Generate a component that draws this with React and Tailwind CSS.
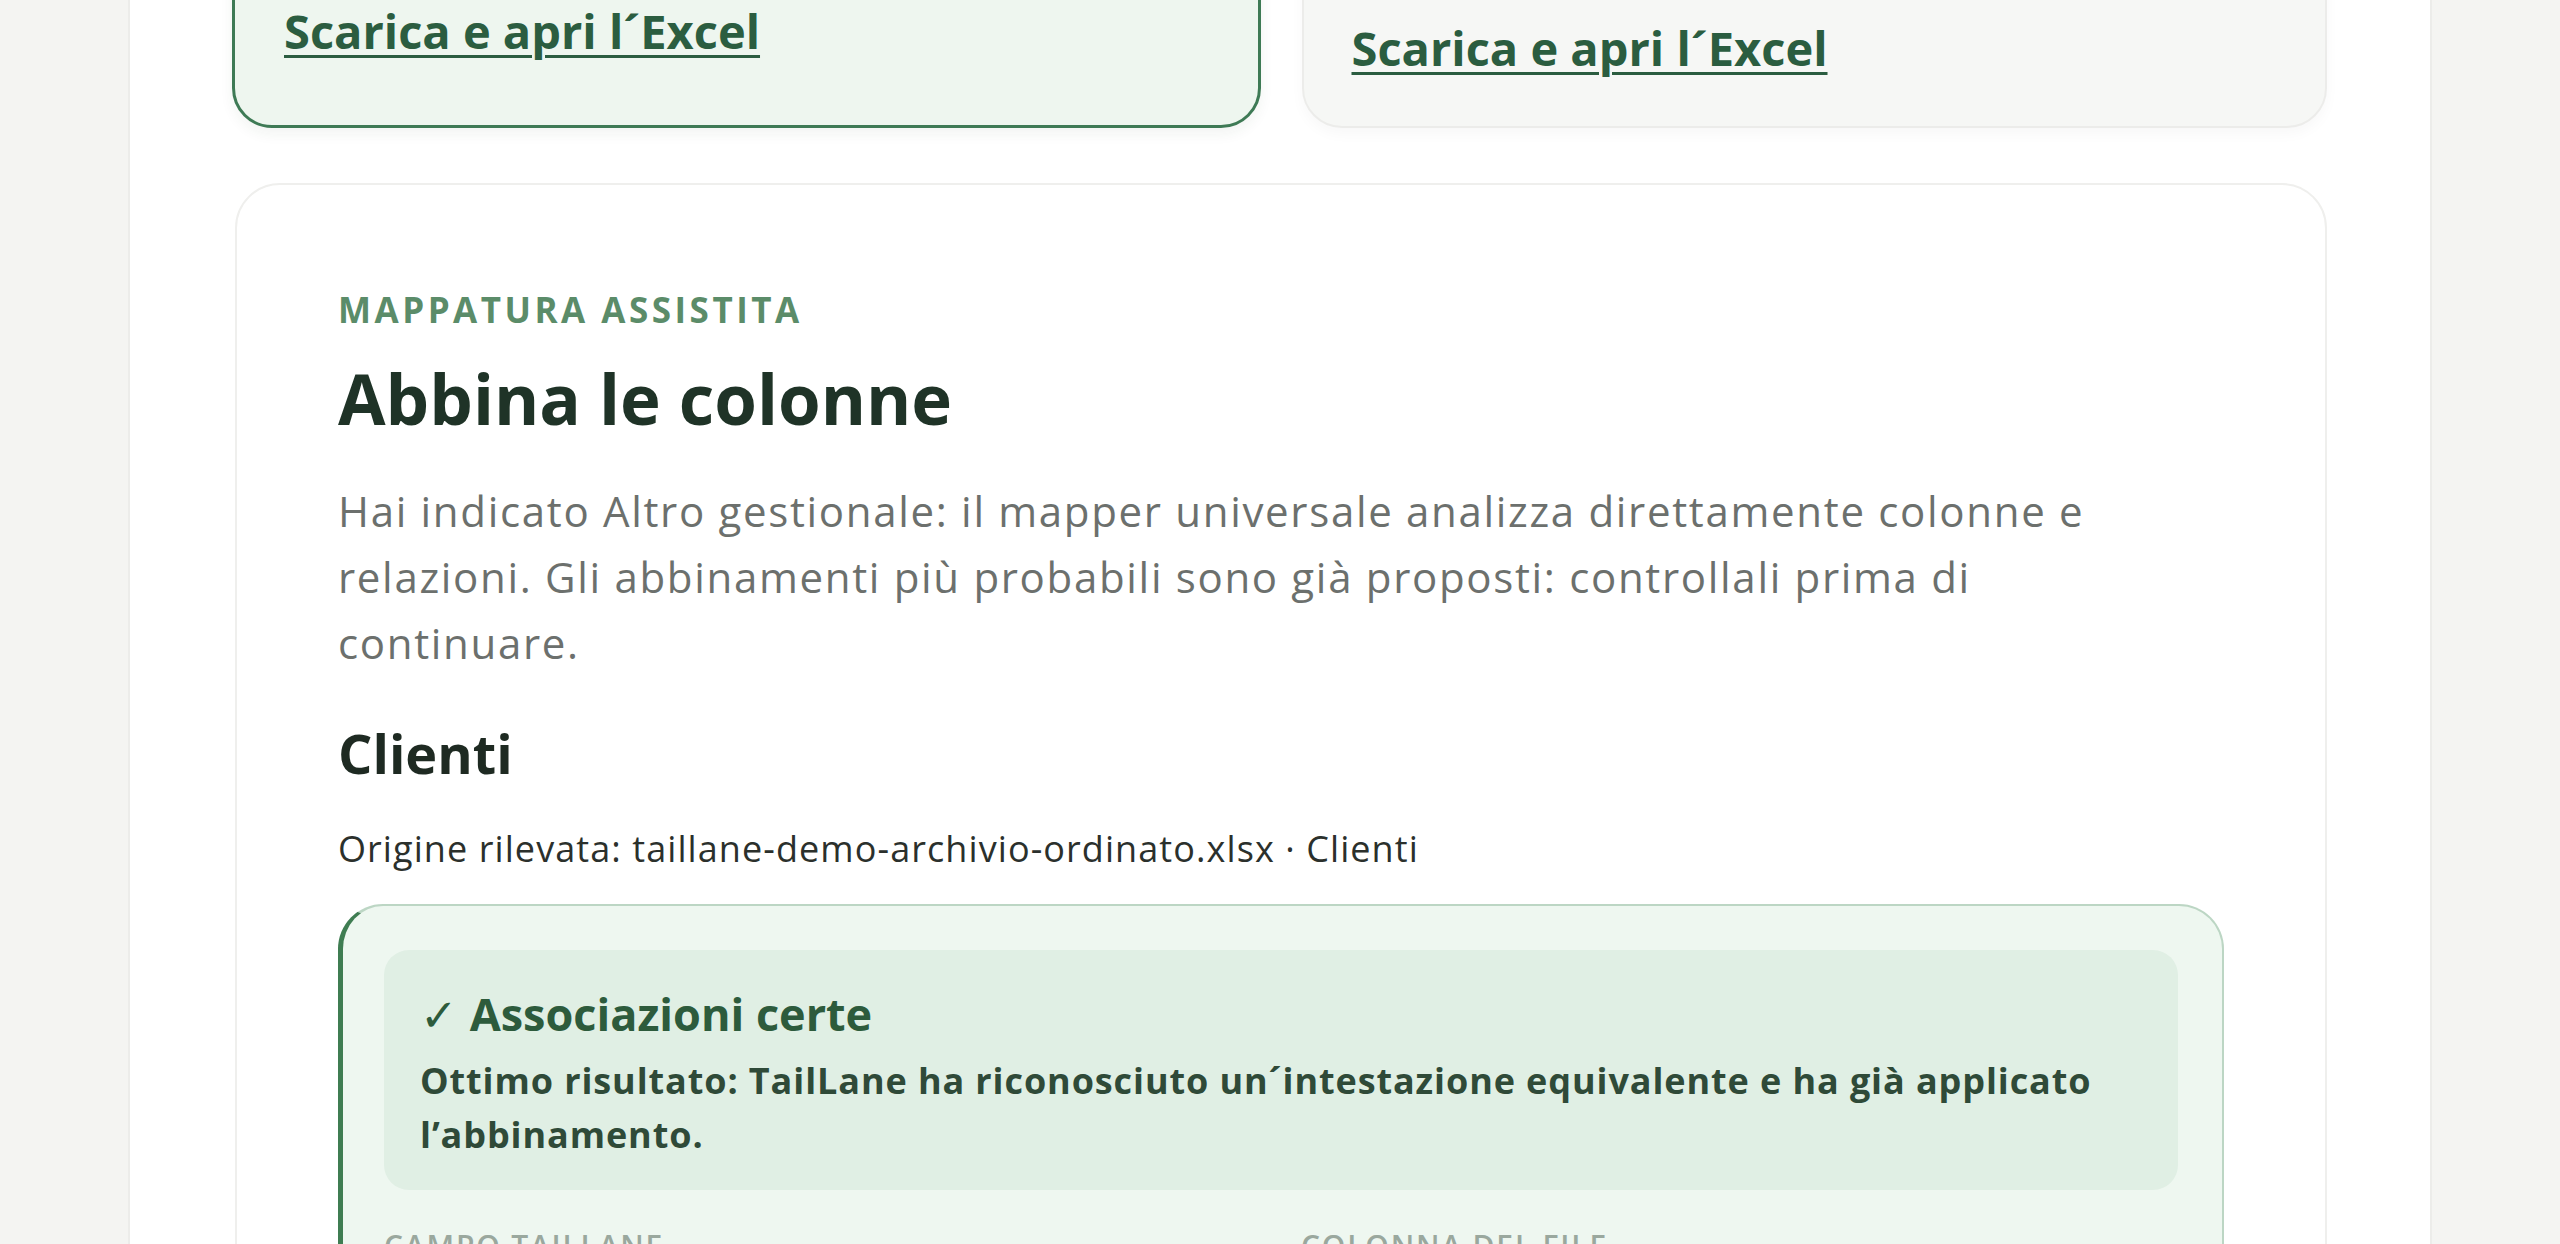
export default function App() {
  return (
    <div
      className="h-[1244px] overflow-hidden bg-[#f4f4f2]"
      style={{ fontFamily: '"Segoe UI", "Open Sans", "Noto Sans", sans-serif' }}
    >
      <div className="mx-[128px] flow-root h-[1400px] border-x-2 border-[#ececea] bg-white pl-[105px] pr-[103px]">
        {/* export cards, scrolled mostly out of view */}
        <div className="-mt-[60px] grid grid-cols-2 gap-[41px]">
          <div className="-ml-[3px] rounded-[40px] border-[3px] border-[#3e7a55] bg-[#eef6ef] px-[49px] pb-[66px] pt-[60px] shadow-[0_6px_14px_rgba(30,60,40,0.06)]">
            <a
              href="#"
              className="text-[47px] font-bold leading-[56px] text-[#2b5d40] underline decoration-[3px] underline-offset-[6px]"
            >
              Scarica e apri l´Excel
            </a>
          </div>
          <div className="rounded-[40px] border-2 border-[#ececea] bg-[#f6f7f5] px-[48px] pb-[47px] pt-[78px] shadow-[0_6px_14px_rgba(0,0,0,0.03)]">
            <a
              href="#"
              className="text-[47px] font-bold leading-[56px] text-[#2b5d40] underline decoration-[3px] underline-offset-[6px]"
            >
              Scarica e apri l´Excel
            </a>
          </div>
        </div>

        <section className="mt-[55px] rounded-[45px] border-2 border-[#efefed] bg-white px-[101px] pt-[105px]">
          <p className="text-[35px] font-bold uppercase leading-[40px] tracking-[0.1em] text-[#5b8c69]">
            Mappatura assistita
          </p>
          <h2 className="mt-[28px] text-[69px] font-bold leading-[80px] text-[#1f3327]">
            Abbina le colonne
          </h2>
          <p className="mt-[40px] max-w-[1800px] text-[42px] leading-[66px] tracking-[0.04em] text-[#6c706d]">
            Hai indicato Altro gestionale: il mapper universale analizza direttamente colonne e
            relazioni. Gli abbinamenti più probabili sono già proposti: controllali prima di
            continuare.
          </p>

          <h3 className="mt-[44px] text-[54px] font-bold leading-[66px] text-[#1e2a22]">Clienti</h3>
          <p className="mt-[40px] text-[36px] leading-[46px] tracking-[0.03em] text-[#2b302c]">
            Origine rilevata: taillane-demo-archivio-ordinato.xlsx · Clienti
          </p>

          <div className="mt-[32px] rounded-[45px] border-2 border-l-[5px] border-[#bcd6c4] border-l-[#3f7d52] bg-[#eef7f0] p-[44px] pl-[41px]">
            <div className="rounded-[25px] bg-[#e0efe4] px-[36px] pb-[28px] pt-[36px]">
              <h4 className="text-[45px] font-bold leading-[56px] text-[#2d5b3c]">
                <span className="font-normal">✓</span> Associazioni certe
              </h4>
              <p className="mt-[12px] text-[36px] font-bold leading-[54px] tracking-[0.025em] text-[#2f4a38]">
                Ottimo risultato: TailLane ha riconosciuto un´intestazione equivalente e ha già
                applicato l’abbinamento.
              </p>
            </div>

            <div className="mt-[36px] grid grid-cols-[1fr_1fr] gap-[40px] text-[30px] font-semibold uppercase leading-[40px] tracking-[0.06em] text-[#9aa89e]">
              <span>Campo TailLane</span>
              <span>Colonna del file</span>
            </div>
          </div>
        </section>
      </div>
    </div>
  );
}
